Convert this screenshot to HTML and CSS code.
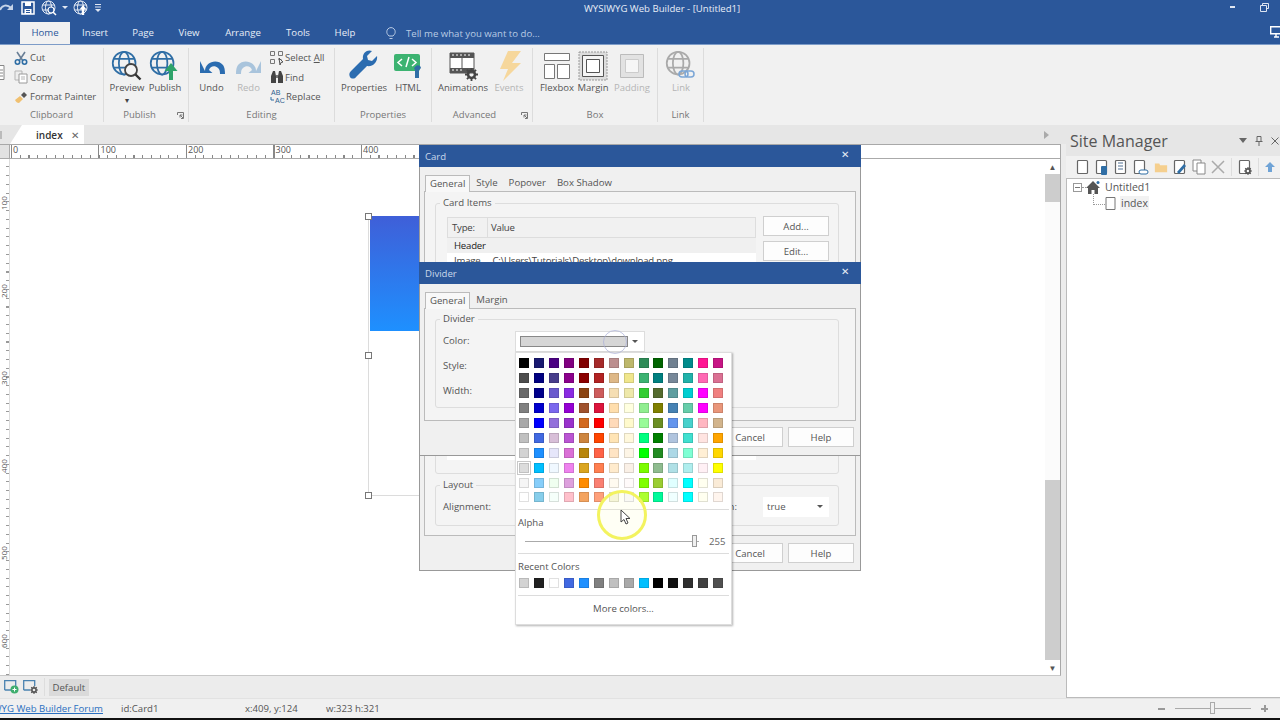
FILE: index.html
```html
<!DOCTYPE html>
<html lang="en">
  <head>
    <meta charset="UTF-8" />
    <meta name="viewport" content="width=device-width, initial-scale=1.0" />
    <title>WYSIWYG Web Builder - [Untitled1]</title>
    <link rel="stylesheet" href="styles.css">
  </head>
  <body>
    <svg class="defs" width="0" height="0">
      <symbol id="globe" viewBox="0 0 32 32">
        <g fill="none" stroke="currentColor" stroke-width="2">
          <circle cx="15" cy="15" r="13" />
          <ellipse cx="15" cy="15" rx="6" ry="13" />
          <path d="M3 10h24M3 20h24" />
        </g>
      </symbol>
      <symbol id="page" viewBox="0 0 14 16">
        <rect x="1.5" y="1.5" width="10" height="13" rx="1" fill="#fff" stroke="#666" stroke-width="1.2" />
      </symbol>
      <symbol id="gear" viewBox="0 0 12 12">
        <circle cx="6" cy="6" r="3.2" fill="none" stroke="currentColor" stroke-width="2.4" />
        <path d="M6 0v2.5M6 9.5V12M0 6h2.5M9.5 6H12M1.8 1.8l1.8 1.8M8.4 8.4l1.8 1.8M1.8 10.2l1.8-1.8M8.4 3.6l1.8-1.8" stroke="currentColor" stroke-width="1.7" />
      </symbol>
    </svg>

    <header class="titlebar">
      <div class="quick-access">
        <svg width="14" height="12" viewBox="0 0 14 12"><path d="M0 8C2 3 7 2 11 6" fill="none" stroke="#c5d3e8" stroke-width="2" /><path d="M13 2v6H7z" fill="#c5d3e8" /></svg>
        <svg class="qa-save" width="14" height="14" viewBox="0 0 14 14"><path d="M1 1h12v12H1z" fill="none" stroke="#fff" stroke-width="1.5" /><path d="M4 1h6v4H4zM3.500 8h7v5h-7z" fill="#fff" /><path d="M5 9.500h4M5 11.500h4" stroke="#2b579a" /></svg>
        <svg class="qa-globe" width="16" height="16" viewBox="0 0 16 16"><use href="#globe" width="16" height="16" color="#e4ebf5" /><circle cx="10" cy="10" r="3" fill="#2b579a" stroke="#fff" stroke-width="1.200" /><path d="M12 12l3 3" stroke="#fff" stroke-width="1.500" /></svg>
        <span class="qa-arrow"></span>
        <svg class="qa-publish" width="16" height="16" viewBox="0 0 16 16"><use href="#globe" width="16" height="16" color="#e4ebf5" /><path d="M10 15V8" stroke="#fff" stroke-width="2.400" /><path d="M6.500 9.500L10 5l3.500 4.500z" fill="#fff" /></svg>
        <svg class="qa-more" width="6" height="8" viewBox="0 0 6 8"><path d="M0 .5h6M0 3h6" stroke="#dfe6f2" /><path d="M0 5h6L3 8z" fill="#dfe6f2" /></svg>
      </div>
      <div class="app-title">WYSIWYG Web Builder - [Untitled1]</div>
      <div class="window-controls">
        <span class="win-min"></span>
        <svg width="9" height="9" viewBox="0 0 9 9"><path d="M2.500 2.500V.5h6v5h-2M.5 2.500h6v6h-6z" fill="none" stroke="#dfe6f2" /></svg>
      </div>
    </header>

    <nav class="menu-tabs">
      <span class="menu-tab active">Home</span>
      <span class="menu-tab insert">Insert</span>
      <span class="menu-tab page">Page</span>
      <span class="menu-tab view">View</span>
      <span class="menu-tab arrange">Arrange</span>
      <span class="menu-tab tools">Tools</span>
      <span class="menu-tab help">Help</span>
      <svg class="bulb" width="10" height="13" viewBox="0 0 10 13"><path d="M3 9C1 7 .8 6 .8 4.800a4.200 4.200 0 0 1 8.400 0C9.200 6 9 7 7 9zM3.500 11.500h3" fill="none" stroke="#b9cbe4" /></svg>
      <span class="tell-me">Tell me what you want to do...</span>
      <svg class="monitor" width="14" height="14" viewBox="0 0 14 14"><path d="M.7.7h11v7H.7zM4 11h5M6 8v3" fill="none" stroke="#fff" stroke-width="1.400" /></svg>
    </nav>

    <section class="ribbon">
      <div class="group clipboard">
        <svg class="paste-edge" width="5" height="15" viewBox="0 0 5 15"><path d="M-3 .5h7v14h-7zM0 5h3M0 8h3M0 11h3" fill="#fff" stroke="#888" /></svg>
        <div class="group-body small-list">
          <div class="small-item">
            <svg width="14" height="14" viewBox="0 0 14 14"><path d="M3 1l6 9M11 1L5 10" stroke="#6a7f96" stroke-width="1.600" /><circle cx="3.500" cy="11" r="2.200" fill="none" stroke="#2f6ea5" stroke-width="1.600" /><circle cx="10.500" cy="11" r="2.200" fill="none" stroke="#2f6ea5" stroke-width="1.600" /></svg>
            <span>Cut</span>
          </div>
          <div class="small-item">
            <svg width="14" height="14" viewBox="0 0 14 14"><path d="M1 1h7v9H1z" fill="#eee" stroke="#b5b5b5" /><path d="M5 4h8v9H5z" fill="#fff" stroke="#9a9a9a" /><path d="M7 7h4M7 9h4" stroke="#b5b5b5" /></svg>
            <span>Copy</span>
          </div>
          <div class="small-item">
            <svg width="14" height="14" viewBox="0 0 14 14"><path d="M1 10l5-4 3 3-4 4c-2 0-3-1-4-3z" fill="#f0c070" /><path d="M7 5l3-3 3 3-3 3z" fill="#555" /></svg>
            <span>Format Painter</span>
          </div>
        </div>
        <div class="group-label">Clipboard</div>
      </div>

      <div class="group publish">
        <div class="group-body big-row">
          <div class="big-button w38">
            <svg class="big-icon" width="32" height="32" viewBox="0 0 32 32"><use href="#globe" width="28" height="28" color="#2f6ea5" /><circle cx="20" cy="20" r="6" fill="#f4f4f4" stroke="#444" stroke-width="1.800" /><path d="M24.500 24.500l5 5" stroke="#333" stroke-width="2.400" /></svg>
            <span>Preview</span>
            <span class="drop">▾</span>
          </div>
          <div class="big-button w38">
            <svg class="big-icon" width="32" height="32" viewBox="0 0 32 32"><use href="#globe" width="28" height="28" color="#2f6ea5" /><path d="M22 30V20" stroke="#2ea36a" stroke-width="4" /><path d="M15.500 21L22 13l6.500 8z" fill="#2ea36a" /></svg>
            <span>Publish</span>
          </div>
        </div>
        <div class="group-label">Publish</div>
        <svg class="launcher" width="7" height="7" viewBox="0 0 7 7"><path d="M.5 3V.5h6v6H4M3 3l3 3M3 5.500V3h2.500" fill="none" stroke="#777" /></svg>
      </div>

      <div class="group editing">
        <div class="group-body big-row">
          <div class="big-button w37">
            <svg class="big-icon" width="32" height="32" viewBox="0 0 32 32"><path d="M9 21C9 12 21 8 27 15c1.500 2 2 5 2 9h-5c0-3-.5-5-2-6-3-3-8-2-9 2l3.500 3H4V11z" fill="#2b6cb0" /></svg>
            <span>Undo</span>
          </div>
          <div class="big-button w37 disabled">
            <svg class="big-icon" width="32" height="32" viewBox="0 0 32 32"><path d="M23 21C23 12 11 8 5 15c-1.500 2-2 5-2 9h5c0-3 .5-5 2-6 3-3 8-2 9 2l-3.500 3H28V11z" fill="#a9c4dc" /></svg>
            <span>Redo</span>
          </div>
          <div class="small-list edit-list">
            <div class="small-item">
              <svg width="14" height="14" viewBox="0 0 14 14"><path d="M.5.5h4v4h-4zM8.500.5h4v4h-4zM.5 8.500h4v4h-4zM8.500 8.500h3" fill="none" stroke="#777" /><path d="M9 7l4 4-2 .5-1 2.500z" fill="none" stroke="#555" /></svg>
              <span>Select <u>A</u>ll</span>
            </div>
            <div class="small-item">
              <svg width="14" height="14" viewBox="0 0 14 14"><path d="M1 13V6l2-5h2l1 5v7zM8 13V6l1-5h2l2 5v7z" fill="#444" /><path d="M6 5h2v3H6z" fill="#777" /></svg>
              <span>Find</span>
            </div>
            <div class="small-item">
              <svg class="replace-icon" width="15" height="15" viewBox="0 0 15 15"><text x="1" y="6" class="mini-text">AB</text><text x="5" y="14" class="mini-text">AC</text><path d="M1 8v3h3" fill="none" stroke="#2f6ea5" /></svg>
              <span>Replace</span>
            </div>
          </div>
        </div>
        <div class="group-label">Editing</div>
      </div>

      <div class="group properties">
        <div class="group-body big-row">
          <div class="big-button w44">
            <svg class="big-icon" width="32" height="32" viewBox="0 0 32 32"><path d="M29 6l-5 5-4-1-1-4 5-5c-5-2-10 2-9 8L3 21c-2 2-2 4-1 6s5 2 6 0l11-11c6 1 11-4 10-10z" fill="#2b6cb0" /></svg>
            <span>Properties</span>
          </div>
          <div class="big-button w44">
            <svg class="big-icon" width="32" height="32" viewBox="0 0 32 32"><rect x="2" y="4" width="26" height="17" rx="2" fill="#3cb371" /><path d="M10 9l-4 3.500 4 3.500M14 17l3-10M20 9l4 3.500-4 3.500" fill="none" stroke="#fff" stroke-width="1.500" /><path d="M24 16a3 3 0 0 1 5 2l-2 2v8h-4v-8l-1-2z" fill="#2f6ea5" /></svg>
            <span>HTML</span>
          </div>
        </div>
        <div class="group-label">Properties</div>
      </div>

      <div class="group advanced">
        <div class="group-body big-row">
          <div class="big-button w46">
            <svg class="big-icon" width="32" height="32" viewBox="0 0 32 32" color="#444"><path d="M3 3h24v20H3z" fill="#fff" stroke="#555" /><path d="M3 3h24v5H3zM3 18h24v5H3z" fill="#555" /><path d="M5 5h2M9 5h2M13 5h2M17 5h2M21 5h2M5 20h2M9 20h2M13 20h2" stroke="#fff" /><path d="M15 8v10" stroke="#555" /><use href="#gear" x="18" y="18" width="13" height="13" /></svg>
            <span>Animations</span>
          </div>
          <div class="big-button w46 disabled">
            <svg class="big-icon" width="32" height="32" viewBox="0 0 32 32"><path d="M28 1H15L7 19h8l-5 12 18-18h-9z" fill="#f6d79c" /></svg>
            <span>Events</span>
          </div>
        </div>
        <div class="group-label">Advanced</div>
        <svg class="launcher" width="7" height="7" viewBox="0 0 7 7"><path d="M.5 3V.5h6v6H4M3 3l3 3M3 5.500V3h2.500" fill="none" stroke="#777" /></svg>
      </div>

      <div class="group box">
        <div class="group-body big-row">
          <div class="big-button w36">
            <svg class="big-icon" width="32" height="32" viewBox="0 0 32 32"><path d="M3.500 3.500h25v7h-25zM3.500 14.500h10v14h-10zM16.500 14.500h12v14h-12z" fill="#fff" stroke="#777" /></svg>
            <span>Flexbox</span>
          </div>
          <div class="big-button w36">
            <svg class="big-icon" width="32" height="32" viewBox="0 0 32 32"><rect x="2" y="2" width="28" height="28" fill="#ddd" stroke="#999" stroke-dasharray="2 1" /><path d="M5.500 5.500h21v21h-21z" fill="#f5f5f5" stroke="#555" /><path d="M9.500 9.500h13v13h-13z" fill="#fff" stroke="#555" /></svg>
            <span>Margin</span>
          </div>
          <div class="big-button w42 disabled">
            <svg class="big-icon" width="32" height="32" viewBox="0 0 32 32"><path d="M4.500 4.500h23v23h-23z" fill="#e2e2e2" stroke="#bbb" /><path d="M9.500 9.500h13v13h-13z" fill="#f6f6f6" stroke="#ccc" /></svg>
            <span>Padding</span>
          </div>
        </div>
        <div class="group-label">Box</div>
      </div>

      <div class="group link">
        <div class="group-body big-row">
          <div class="big-button w44 disabled">
            <svg class="big-icon" width="32" height="32" viewBox="0 0 32 32"><use href="#globe" width="28" height="28" color="#aaa" /><rect x="14" y="21" width="9" height="6" rx="3" fill="none" stroke="#7ba6d6" stroke-width="1.500" /><rect x="20" y="21" width="9" height="6" rx="3" fill="none" stroke="#7ba6d6" stroke-width="1.500" /></svg>
            <span>Link</span>
          </div>
        </div>
        <div class="group-label">Link</div>
      </div>
    </section>

    <main class="workspace">
      <div class="doc-column">
        <div class="doc-tabs">
          <span class="tab-prev"></span>
          <div class="doc-tab"><span>index</span><span class="doc-tab-close">✕</span></div>
          <span class="tab-next"></span>
        </div>
        <div class="doc-pane">
          <div class="ruler-row">
            <div class="ruler-corner"></div>
            <div class="h-ruler">
              <span>0</span><span>100</span><span>200</span><span>300</span><span>400</span>
            </div>
          </div>
          <div class="doc-body">
            <div class="v-ruler">
              <span>100</span><span>200</span><span>300</span><span>400</span><span>500</span><span>600</span>
            </div>
            <div class="canvas">
              <div class="card-selection">
                <div class="card-header"></div>
                <i class="handle handle-top"></i>
                <i class="handle handle-mid"></i>
                <i class="handle handle-bottom"></i>
              </div>
            </div>
            <div class="scrollbar">
              <div class="scroll-btn">▲</div>
              <div class="scroll-thumb-top"></div>
              <div class="scroll-track"></div>
              <div class="scroll-thumb-bottom"></div>
              <div class="scroll-btn">▼</div>
            </div>
          </div>
        </div>
        <div class="layout-bar">
          <svg width="15" height="14" viewBox="0 0 15 14"><path d="M.7 10V.7h11V6M.7 10H7" fill="none" stroke="#4a82b0" stroke-width="1.300" /><circle cx="10.500" cy="9.500" r="4" fill="#3fae6e" /><path d="M8.500 9.500h4M10.500 7.500v4" stroke="#fff" /></svg>
          <svg width="15" height="14" viewBox="0 0 15 14" color="#555"><path d="M.7 10V.7h11V6M.7 10H7" fill="none" stroke="#4a82b0" stroke-width="1.300" /><use href="#gear" x="7" y="6" width="8" height="8" /></svg>
          <span class="layout-sep"></span>
          <span class="layout-default">Default</span>
        </div>
      </div>

      <aside class="site-panel">
        <div class="site-title">
          <span>Site Manager</span>
          <span class="site-controls">
            <span class="site-drop"></span>
            <svg width="8" height="10" viewBox="0 0 8 10"><path d="M2 .5h4v5H2zM.5 5.500h7M4 6v4" fill="none" stroke="#666" /></svg>
            <svg width="8" height="8" viewBox="0 0 8 8"><path d="M.5.5l7 7M7.500.5l-7 7" stroke="#666" /></svg>
          </span>
        </div>
        <div class="site-toolbar">
          <svg width="14" height="16"><use href="#page" /></svg>
          <svg width="14" height="16" viewBox="0 0 14 16"><use href="#page" /><rect x="6" y="7" width="6" height="9" rx="1" fill="#2f6ea5" /></svg>
          <svg width="14" height="16" viewBox="0 0 14 16"><use href="#page" /><path d="M4 4h5M4 7h5M4 10h5" stroke="#8aa0b8" stroke-width="1.500" /></svg>
          <svg width="16" height="16" viewBox="0 0 16 16"><use href="#page" width="14" height="16" /><rect x="6" y="11" width="9" height="4" rx="2" fill="#fff" stroke="#2f6ea5" /></svg>
          <svg width="14" height="14" viewBox="0 0 16 14"><path d="M1 3h5l1 2h8v8H1z" fill="#f5cf8e" /></svg>
          <svg width="14" height="16" viewBox="0 0 14 16"><use href="#page" /><path d="M4 13l7-8 2 2-7 8z" fill="#2f6ea5" /></svg>
          <svg width="14" height="16" viewBox="0 0 14 16"><path d="M1 1h8v11H1z" fill="#fff" stroke="#888" /><path d="M5 4h8v11H5z" fill="#fff" stroke="#888" /></svg>
          <svg width="14" height="14" viewBox="0 0 14 14"><path d="M1 1l12 12M13 1L1 13" stroke="#aaa" stroke-width="1.500" /></svg>
          <span class="toolbar-sep"></span>
          <svg width="14" height="16" viewBox="0 0 14 16" color="#555"><use href="#page" /><use href="#gear" x="6" y="8" width="8" height="8" /></svg>
          <span class="toolbar-sep"></span>
          <svg width="10" height="10" viewBox="0 0 10 10"><path d="M5 0l5 5H7v5H3V5H0z" fill="#6fa3d6" /></svg>
        </div>
        <div class="site-tree">
          <div class="tree-row">
            <span class="tree-box"></span>
            <span class="tree-dash"></span>
            <svg width="14" height="13" viewBox="0 0 14 13"><path d="M7 0L0 7h2v6h3.500V9h3v4H12V7h2z" fill="#555" /><circle cx="12" cy="1.500" r="1.500" fill="#2f6ea5" /></svg>
            <span class="tree-label">Untitled1</span>
          </div>
          <div class="tree-row tree-child">
            <span class="tree-elbow"></span>
            <svg width="11" height="13" viewBox="0 0 11 13"><path d="M1 .5h9v12H1z" fill="#fff" stroke="#777" /></svg>
            <span class="tree-label selected">index</span>
          </div>
        </div>
      </aside>
    </main>

    <footer class="statusbar">
      <div class="status-link"><a>WYSIWYG Web Builder Forum</a></div>
      <span class="status-id">id:Card1</span>
      <span class="status-pos">x:409, y:124</span>
      <span class="status-size">w:323 h:321</span>
      <div class="zoom-control">
        <span class="zoom-minus"></span>
        <span class="zoom-line"><i></i></span>
        <span class="zoom-plus"></span>
      </div>
    </footer>
    <div class="screen-edge"></div>

    <!-- dialogs, they float over the editor -->
    <div class="dialog card-dialog">
      <div class="dialog-title">Card<span class="dialog-close">✕</span></div>
      <div class="dialog-body">
        <div class="dialog-tabs">
          <span class="dialog-tab active">General</span>
          <span class="dialog-tab">Style</span>
          <span class="dialog-tab">Popover</span>
          <span class="dialog-tab">Box Shadow</span>
        </div>
        <div class="tab-panel">
          <fieldset class="field-group card-items">
            <legend>Card Items</legend>
            <div class="items-row">
              <div class="items-list">
                <div class="items-head"><span class="col-type">Type:</span><span class="col-value">Value</span></div>
                <div class="items-item strong">Header</div>
                <div class="items-item">Image<span class="items-path">C:\Users\Tutorials\Desktop\download.png</span></div>
              </div>
              <div class="items-buttons">
                <button class="btn">Add...</button>
                <button class="btn">Edit...</button>
              </div>
            </div>
          </fieldset>
          <fieldset class="field-group layout-group">
            <legend>Layout</legend>
            <div class="layout-row">
              <span>Alignment:</span>
              <span class="layout-colon">n:</span>
              <div class="select-box">true<span class="select-arrow"></span></div>
            </div>
          </fieldset>
        </div>
        <div class="dialog-buttons">
          <button class="btn">Cancel</button>
          <button class="btn">Help</button>
        </div>
      </div>
    </div>

    <div class="dialog divider-dialog">
      <div class="dialog-title">Divider<span class="dialog-close">✕</span></div>
      <div class="dialog-body">
        <div class="dialog-tabs">
          <span class="dialog-tab active">General</span>
          <span class="dialog-tab">Margin</span>
        </div>
        <div class="tab-panel">
          <fieldset class="field-group divider-group">
            <legend>Divider</legend>
            <div class="form-row color-row">
              <label>Color:</label>
              <div class="color-select"><span class="color-value"></span><span class="select-arrow"></span></div>
            </div>
            <div class="form-row"><label>Style:</label></div>
            <div class="form-row"><label>Width:</label></div>
          </fieldset>
        </div>
        <div class="dialog-buttons">
          <button class="btn">Cancel</button>
          <button class="btn">Help</button>
        </div>
      </div>
    </div>

    <div class="color-popup">
      <div class="swatches" id="palette"></div>
      <div class="popup-section alpha">
        <div class="popup-label">Alpha</div>
        <div class="alpha-row">
          <span class="alpha-line"><i></i></span>
          <span class="alpha-value">255</span>
        </div>
      </div>
      <div class="popup-section recent">
        <div class="popup-label">Recent Colors</div>
        <div class="swatches" id="recent"></div>
      </div>
      <div class="popup-section more-colors">More colors...</div>
    </div>

    <div class="click-ring"></div>
    <div class="mouse-ring"></div>
    <svg class="cursor" width="11" height="16" viewBox="0 0 11 16"><path d="M1 1v12l3-2.500 2 4.500 2-1-2-4.500h4z" fill="#fff" stroke="#444" /></svg>

    <script src="script.js"></script>
  </body>
</html>
```

FILE: styles.css
```css
* {
  box-sizing: border-box;
}

body {
  margin: 0;
  width: 1280px;
  height: 720px;
  overflow: hidden;
  display: flex;
  flex-direction: column;
  position: relative;
  background: #f0f0f0;
  color: #444;
  font-family: "Open Sans", "Liberation Sans", sans-serif;
  font-size: 9.600px;
}

.defs {
  position: absolute;
}

/* title bar */
.titlebar {
  height: 22px;
  background: #2b579a;
  display: flex;
  align-items: flex-start;
  color: #e8eef7;
  position: relative;
  flex-shrink: 0;
}

.quick-access {
  display: flex;
  align-items: center;
  height: 15px;
  width: 110px;
}

.qa-save {
  margin-left: 7px;
}

.qa-globe {
  margin-left: 6px;
}

.qa-arrow {
  width: 0;
  height: 0;
  margin: 0 5px;
  border: 3px solid transparent;
  border-top: 3px solid #dfe6f2;
  border-bottom: 0;
}

.qa-more {
  margin-left: 6px;
}

.app-title {
  position: absolute;
  left: 584px;
  top: 2px;
  line-height: 14px;
  white-space: nowrap;
}

.window-controls {
  margin-left: auto;
  display: flex;
  align-items: center;
  gap: 25px;
  height: 14px;
  padding-right: 11px;
}

.win-min {
  width: 5px;
  height: 2px;
  background: #dfe6f2;
}

/* menu tabs */
.menu-tabs {
  height: 23px;
  background: #2b579a;
  border-bottom: 1px solid #7d9cc8;
  display: flex;
  align-items: center;
  color: #e8eef7;
  flex-shrink: 0;
  position: relative;
  padding-left: 20px;
}

.menu-tab {
  line-height: 22px;
  text-align: center;
}

.menu-tab.active {
  width: 50px;
  height: 22px;
  background: #f1f1f1;
  color: #2b579a;
}

.insert {
  width: 50px;
}

.page {
  width: 46px;
}

.view {
  width: 46px;
}

.arrange {
  width: 62px;
}

.tools {
  width: 48px;
}

.help {
  width: 46px;
}

.bulb {
  margin-left: 18px;
}

.tell-me {
  margin-left: 10px;
  color: #b9cbe4;
}

.monitor {
  margin-left: auto;
  margin-right: -4px;
}

/* ribbon */
.ribbon {
  height: 80px;
  background: #f1f1f1;
  display: flex;
  flex-shrink: 0;
  font-size: 9.500px;
}

.group {
  display: flex;
  flex-direction: column;
  position: relative;
  margin: 3px 0;
  border-right: 1px solid #dcdcdc;
  flex-shrink: 0;
}

.clipboard {
  width: 104px;
}

.publish {
  width: 85px;
}

.editing {
  width: 146px;
}

.properties {
  width: 97px;
}

.advanced {
  width: 101px;
}

.box {
  width: 125px;
}

.link {
  width: 46px;
}

.group-body {
  height: 60px;
  flex-shrink: 0;
  display: flex;
}

.group-label {
  height: 14px;
  line-height: 14px;
  text-align: center;
  color: #777;
}

.publish .group-label {
  padding-right: 13px;
}

.advanced .group-label {
  padding-right: 15px;
}

.launcher {
  position: absolute;
  right: 4px;
  bottom: 3px;
}

.big-row {
  padding-top: 2px;
}

.publish .big-row {
  padding-left: 4px;
}

.editing .big-row {
  padding-left: 4px;
}

.properties .big-row {
  padding-left: 7px;
}

.advanced .big-row {
  padding-left: 8px;
}

.box .big-row {
  padding-left: 6px;
}

.link .big-row {
  padding-left: 1px;
}

.big-button {
  display: flex;
  flex-direction: column;
  align-items: center;
  line-height: 14px;
  color: #555;
  white-space: nowrap;
}

.big-button.disabled {
  color: #b5b5b5;
}

.big-icon {
  margin-bottom: -1px;
}

.drop {
  font-size: 8px;
  line-height: 9px;
  color: #444;
}

.w36 {
  width: 36px;
}

.w37 {
  width: 37px;
}

.w38 {
  width: 38px;
}

.w42 {
  width: 42px;
}

.w44 {
  width: 44px;
}

.w46 {
  width: 46px;
}

.small-list {
  display: flex;
  flex-direction: column;
  padding-top: 0;
}

.clipboard .small-list {
  padding-left: 14px;
}

.edit-list {
  margin-left: 3px;
  margin-top: -2px;
}

.small-item {
  display: flex;
  align-items: center;
  height: 19.500px;
  gap: 1px;
  color: #555;
  white-space: nowrap;
}

.clipboard .small-item {
  gap: 2px;
}

.mini-text {
  font-size: 7px;
  fill: #2f5f8f;
  font-family: "Liberation Sans", sans-serif;
}

.paste-edge {
  position: absolute;
  left: 0;
  top: 17px;
}

/* workspace */
.workspace {
  flex: 1;
  display: flex;
  min-height: 0;
}

.doc-column {
  width: 1066px;
  flex-shrink: 0;
  display: flex;
  flex-direction: column;
  padding-right: 5px;
  background: #ececec;
}

.doc-tabs {
  height: 19px;
  display: flex;
  align-items: flex-end;
  background: #e6e6e6;
  margin-right: -5px;
  padding-right: 5px;
  position: relative;
  flex-shrink: 0;
}

.tab-prev {
  position: absolute;
  left: -2px;
  top: 6px;
  width: 4px;
  height: 8px;
  background: #bbb;
}

.doc-tab {
  width: 74px;
  height: 19px;
  margin-left: 10px;
  padding-left: 26px;
  display: flex;
  align-items: center;
  background: #fff;
  clip-path: polygon(12px 0, 100% 0, 100% 100%, 0 100%);
  font-weight: 600;
  font-size: 10px;
  color: #333;
}

.doc-tab-close {
  margin-left: 8px;
  font-weight: 400;
  font-size: 10px;
  color: #666;
}

.tab-next {
  position: absolute;
  right: 13px;
  top: 6px;
  width: 0;
  height: 0;
  border: 4px solid transparent;
  border-left: 5px solid #aaa;
}

.doc-pane {
  flex: 1;
  display: flex;
  flex-direction: column;
  min-height: 0;
  border-top: 1px solid #a8a8a8;
  border-right: 1px solid #a8a8a8;
  border-bottom: 1px solid #c8c8c8;
  background: #fff;
}

.ruler-row {
  height: 14px;
  display: flex;
  border-bottom: 1px solid #aaa;
  flex-shrink: 0;
}

.ruler-corner {
  width: 10px;
  background: #e2e2e2;
  border-right: 1px solid #aaa;
}

.h-ruler {
  width: 409px;
  display: flex;
  padding-left: 3px;
  font-size: 9px;
  color: #555;
  background-image:
    repeating-linear-gradient(90deg, #888 0 1px, transparent 1px 87.500px),
    repeating-linear-gradient(90deg, #888 0 1px, transparent 1px 8.750px);
  background-size: 100% 100%, 100% 3px;
  background-position: 1px 0, 1px bottom;
  background-repeat: no-repeat;
}

.h-ruler span {
  flex: none;
  width: 87.500px;
  height: 12px;
  margin-top: -1px;
  line-height: 12px;
}

.h-ruler span:last-child {
  width: 20px;
}

.doc-body {
  flex: 1;
  display: flex;
  min-height: 0;
}

.v-ruler {
  width: 10px;
  flex-shrink: 0;
  padding-top: 37px;
  display: flex;
  flex-direction: column;
  font-size: 8px;
  line-height: 8px;
  color: #555;
  border-right: 1px solid #ddd;
  background-image: repeating-linear-gradient(0deg, #999 0 1px, transparent 1px 8.750px);
  background-size: 3px 100%;
  background-position: right 0;
  background-repeat: no-repeat;
}

.v-ruler span {
  flex: none;
  width: 8px;
  height: 14px;
  margin-bottom: 73.500px;
  writing-mode: vertical-rl;
  transform: rotate(180deg);
  text-align: center;
  white-space: nowrap;
}

.canvas {
  flex: 1;
  position: relative;
}

/* the selected card on the page */
.card-selection {
  position: absolute;
  left: 358px;
  top: 57px;
  width: 62px;
  height: 280px;
  border-left: 1px solid #dcdcdc;
  border-bottom: 1px solid #dcdcdc;
}

.card-header {
  margin-left: 1px;
  height: 115px;
  background: linear-gradient(#3f5fd8, #1e90ff);
}

.handle {
  position: absolute;
  left: -4px;
  width: 7px;
  height: 7px;
  background: #fff;
  border: 1px solid #777;
}

.handle-top {
  top: -3px;
}

.handle-mid {
  top: 136px;
}

.handle-bottom {
  bottom: -4px;
}

.scrollbar {
  width: 15px;
  flex-shrink: 0;
  display: flex;
  flex-direction: column;
  background: #fff;
}

.scroll-btn {
  height: 15px;
  font-size: 8px;
  line-height: 15px;
  text-align: center;
  color: #555;
}

.scroll-thumb-top {
  height: 28px;
  background: #cdcdcd;
}

.scroll-track {
  flex: 1;
  background: #fbfbfb;
}

.scroll-thumb-bottom {
  height: 180px;
  background: #cdcdcd;
}

.layout-bar {
  height: 22px;
  display: flex;
  align-items: center;
  gap: 4px;
  padding-left: 4px;
  flex-shrink: 0;
}

.layout-sep {
  width: 1px;
  height: 18px;
  background: #ddd;
  margin-left: 2px;
}

.layout-default {
  padding: 0 3.500px;
  line-height: 17px;
  background: #dadada;
  color: #555;
}

/* site manager */
.site-panel {
  flex: 1;
  min-width: 0;
  display: flex;
  flex-direction: column;
  background: #e6e6e6;
}

.site-title {
  height: 31px;
  flex-shrink: 0;
  display: flex;
  align-items: center;
  padding: 0 1px 0 4px;
  font-size: 16px;
  color: #555;
}

.site-controls {
  margin-left: auto;
  display: flex;
  align-items: center;
  gap: 8px;
}

.site-drop {
  width: 0;
  height: 0;
  border: 4px solid transparent;
  border-top: 5px solid #666;
  border-bottom: 0;
}

.site-toolbar {
  height: 22px;
  flex-shrink: 0;
  background: #f1f1f1;
  display: flex;
  align-items: center;
  gap: 5px;
  padding-left: 10px;
  overflow: hidden;
}

.site-toolbar svg {
  flex-shrink: 0;
}

.toolbar-sep {
  width: 1px;
  height: 18px;
  flex-shrink: 0;
  background: #ddd;
  margin: 0 1px;
}

.site-tree {
  flex: 1;
  background: #fff;
  border-left: 1px solid #bbb;
  border-top: 1px solid #bbb;
  border-bottom: 1px solid #bbb;
  padding: 0 0 0 6px;
  font-size: 10.500px;
  color: #555;
}

.tree-row {
  display: flex;
  align-items: center;
  height: 16px;
}

.tree-box {
  width: 9px;
  height: 9px;
  border: 1px solid #999;
  background: linear-gradient(#777, #777) center / 5px 1px no-repeat;
}

.tree-dash {
  width: 4px;
  border-top: 1px dotted #999;
}

.tree-row svg {
  flex-shrink: 0;
}

.tree-label {
  margin-left: 5px;
}

.tree-child {
  padding-left: 18px;
}

.tree-elbow {
  width: 12px;
  height: 11px;
  margin-top: -8px;
  margin-left: 2px;
  border-left: 1px dotted #999;
  border-bottom: 1px dotted #999;
}

.tree-child .tree-label {
  margin-left: 4px;
  padding: 0 1px;
  background: #f2f2f2;
}

/* status bar */
.statusbar {
  height: 20px;
  display: flex;
  align-items: center;
  background: #f0f0f0;
  border-top: 1px solid #e2e2e2;
  flex-shrink: 0;
  color: #555;
}

.status-link {
  width: 103px;
  display: flex;
  justify-content: flex-end;
  overflow: hidden;
  white-space: nowrap;
  margin-right: 18px;
}

.status-link a {
  color: #2a6fc0;
  text-decoration: underline;
}

.status-id {
  width: 124px;
}

.status-pos {
  width: 81px;
}

.zoom-control {
  margin-left: auto;
  display: flex;
  align-items: center;
  padding-right: 12px;
}

.zoom-minus {
  width: 7px;
  height: 2px;
  background: #999;
}

.zoom-line {
  width: 76px;
  height: 1px;
  margin: 0 10px;
  background: #aaa;
  position: relative;
}

.zoom-line i {
  position: absolute;
  left: 35px;
  top: -6px;
  width: 5px;
  height: 12px;
  background: #f0f0f0;
  border: 1px solid #aaa;
}

.zoom-plus {
  width: 7px;
  height: 7px;
  background:
    linear-gradient(#999, #999) center / 7px 2px no-repeat,
    linear-gradient(#999, #999) center / 2px 7px no-repeat;
}

.screen-edge {
  height: 2px;
  background: #111;
  flex-shrink: 0;
}

/* dialogs */
.dialog {
  position: absolute;
  left: 419px;
  width: 442px;
  background: #f0f0f0;
  border: 1px solid #999;
  border-top: 0;
  display: flex;
  flex-direction: column;
}

.card-dialog {
  top: 145px;
  height: 426px;
}

.divider-dialog {
  top: 262px;
  height: 194px;
}

.dialog-title {
  height: 22px;
  margin: 0 -1px;
  padding: 1px 6px 0;
  background: #2b579a;
  color: #c9d7ea;
  line-height: 21px;
  position: relative;
  flex-shrink: 0;
}

.dialog-close {
  position: absolute;
  right: 12px;
  top: -1px;
  font-size: 10px;
  color: #e6ecf5;
}

.dialog-body {
  flex: 1;
  display: flex;
  flex-direction: column;
  padding: 8px 4px 0;
  min-height: 0;
}

.dialog-tabs {
  display: flex;
  height: 16px;
  gap: 11px;
  padding-left: 1px;
  color: #555;
  flex-shrink: 0;
}

.dialog-tab {
  line-height: 15px;
}

.dialog-tab.active {
  padding: 0 4px;
  margin-right: -5px;
  background: #f8f8f8;
  border: 1px solid #bbb;
  border-bottom: 0;
  position: relative;
  z-index: 1;
  height: 17px;
}

.tab-panel {
  border: 1px solid #bbb;
  background: #f4f4f4;
  padding: 6px 16px 0 10px;
  display: flex;
  flex-direction: column;
  flex-shrink: 0;
}

.field-group {
  margin: 0;
  padding: 0 9px 0 7px;
  min-width: 0;
  border: 1px solid #ddd;
  border-radius: 3px;
  color: #555;
}

.field-group legend {
  padding: 0 3px;
  margin-left: -3px;
  line-height: 10px;
}

.card-dialog .tab-panel {
  height: 345px;
}

.card-items {
  height: 276px;
}

.items-row {
  display: flex;
  gap: 7px;
  margin-top: 9px;
  padding-left: 4px;
}

.items-list {
  width: 310px;
  height: 243px;
  background: #fff;
  color: #444;
  letter-spacing: -.2px;
}

.items-head {
  height: 21px;
  display: flex;
  align-items: center;
  background: #f1f1f1;
  border: 1px solid #ddd;
}

.col-type {
  width: 40px;
  padding-left: 4px;
  border-right: 1px solid #ddd;
  line-height: 19px;
}

.col-value {
  padding-left: 3px;
}

.items-item {
  height: 15px;
  line-height: 15px;
  padding-left: 7px;
}

.items-item.strong {
  background: #f0f0f0;
  color: #222;
}

.items-path {
  margin-left: 12px;
}

.items-buttons {
  display: flex;
  flex-direction: column;
  gap: 5px;
  margin-top: -1px;
}

.btn {
  width: 66px;
  height: 20px;
  padding: 0;
  background: #fdfdfd;
  border: 1px solid #cfcfcf;
  font-family: "Open Sans", "Liberation Sans", sans-serif;
  font-size: 9.600px;
  color: #555;
}

.layout-group {
  margin-top: 6px;
  height: 46px;
}

.layout-row {
  display: flex;
  align-items: center;
  height: 23px;
  margin-top: 5px;
}

.layout-colon {
  margin-left: auto;
  margin-right: 26px;
}

.select-box {
  width: 66px;
  height: 20px;
  padding-left: 4px;
  line-height: 19px;
  background: #fff;
  position: relative;
}

.select-arrow {
  position: absolute;
  right: 6px;
  top: 8px;
  width: 0;
  height: 0;
  border: 3px solid transparent;
  border-top: 3px solid #555;
  border-bottom: 0;
}

.dialog-buttons {
  display: flex;
  justify-content: flex-end;
  gap: 5px;
  padding: 7px 2px 0 0;
}

.divider-dialog .tab-panel {
  height: 113px;
  padding-top: 5px;
}

.divider-dialog .dialog-buttons {
  padding-top: 6px;
}

.divider-group {
  height: 94px;
}

.form-row {
  display: flex;
  align-items: center;
  height: 25px;
}

.form-row label {
  width: 72px;
}

.color-row {
  margin-top: 4px;
}

.color-select {
  width: 130px;
  height: 21px;
  margin-top: 2px;
  padding: 4px;
  background: #fff;
  border: 1px solid #ddd;
  position: relative;
}

.color-value {
  display: block;
  width: 108px;
  height: 11px;
  background: #d6d6d6;
  border: 1px solid #888;
}

/* colour popup */
.color-popup {
  position: absolute;
  left: 515px;
  top: 352px;
  width: 217px;
  height: 273px;
  background: #fff;
  border: 1px solid #ddd;
  box-shadow: 1px 1px 2px rgba(0, 0, 0, 0.3);
  display: flex;
  flex-direction: column;
  z-index: 2;
}

#palette {
  padding: 3px 1px 4px;
  height: 156px;
}

.swatches {
  display: grid;
  grid-template-columns: repeat(14, 14.900px);
  grid-auto-rows: 14.900px;
  align-items: center;
  justify-items: center;
  flex-shrink: 0;
}

.swatch {
  width: 10px;
  height: 10px;
  border: 1px solid rgba(0, 0, 0, 0.12);
}

.swatch.selected {
  outline: 1px solid #c8c8c8;
  outline-offset: 1px;
}

.popup-section {
  margin: 0 2px;
  border-top: 1px solid #dcdcdc;
  flex-shrink: 0;
}

.alpha {
  height: 44px;
  padding-top: 6px;
}

.popup-label {
  line-height: 13px;
  color: #555;
}

.alpha-row {
  display: flex;
  align-items: center;
  margin-top: 6px;
}

.alpha-line {
  width: 174px;
  height: 1px;
  margin-left: 7px;
  background: #aaa;
  position: relative;
}

.alpha-line i {
  position: absolute;
  left: 167px;
  top: -6px;
  width: 5px;
  height: 12px;
  background: #f0f0f0;
  border: 1px solid #999;
}

.alpha-value {
  margin-left: 10px;
  color: #666;
}

.recent {
  height: 42px;
  padding-top: 6px;
}

.recent .popup-label {
  margin-bottom: 3px;
}

#recent {
  margin-left: -1px;
}

.more-colors {
  line-height: 26px;
  text-align: center;
  color: #555;
}

/* screen recorder mouse marks */
.click-ring {
  position: absolute;
  left: 603px;
  top: 330px;
  width: 24px;
  height: 24px;
  border: 1.500px solid rgba(170, 175, 215, 0.7);
  border-radius: 50%;
  z-index: 3;
}

.mouse-ring {
  position: absolute;
  left: 597px;
  top: 490px;
  width: 50px;
  height: 50px;
  border: 3px solid #f3f35f;
  border-radius: 50%;
  background: rgba(255, 255, 190, 0.15);
  z-index: 3;
}

.cursor {
  position: absolute;
  left: 620px;
  top: 509px;
  z-index: 4;
}
```

FILE: script.js
```js
const paletteColors = [
  '#000000', '#191970', '#4b0082', '#800080', '#800000', '#a52a2a', '#bc8f8f', '#bdb76b', '#2e8b57', '#006400', '#708090', '#008b8b', '#ff1493', '#c71585',
  '#4d4d4d', '#000080', '#483d8b', '#8b008b', '#8b0000', '#b22222', '#deb887', '#f0e68c', '#3cb371', '#008080', '#778899', '#20b2aa', '#ff69b4', '#db7093',
  '#696969', '#00008b', '#6a5acd', '#8a2be2', '#8b4513', '#cd5c5c', '#f5deb3', '#eee8aa', '#32cd32', '#556b2f', '#5f9ea0', '#00ced1', '#ff00ff', '#f08080',
  '#808080', '#0000cd', '#7b68ee', '#9400d3', '#a0522d', '#dc143c', '#ffdead', '#ffffe0', '#90ee90', '#808000', '#4682b4', '#66cdaa', '#ff00ff', '#e9967a',
  '#a9a9a9', '#0000ff', '#9370db', '#9932cc', '#d2691e', '#ff0000', '#ffdab9', '#fffacd', '#98fb98', '#6b8e23', '#6495ed', '#48d1cc', '#ffb6c1', '#d2b48c',
  '#c0c0c0', '#4169e1', '#d8bfd8', '#ba55d3', '#cd853f', '#ff4500', '#ffe4b5', '#fff8dc', '#00ff7f', '#008000', '#b0c4de', '#40e0d0', '#ffe4e1', '#ffa500',
  '#d3d3d3', '#1e90ff', '#e6e6fa', '#da70d6', '#b8860b', '#ff6347', '#ffe4c4', '#fdf5e6', '#00ff00', '#228b22', '#add8e6', '#7fffd4', '#ffefd5', '#ffd700',
  '#dcdcdc', '#00bfff', '#f0f8ff', '#ee82ee', '#daa520', '#ff7f50', '#ffebcd', '#faf0e6', '#7cfc00', '#8fbc8f', '#b0e0e6', '#afeeee', '#fff0f5', '#ffff00',
  '#f5f5f5', '#87cefa', '#f0fff0', '#dda0dd', '#ff8c00', '#fa8072', '#fffaf0', '#fffafa', '#7fff00', '#9acd32', '#e0ffff', '#00ffff', '#fffff0', '#faebd7',
  '#ffffff', '#87ceeb', '#f5fffa', '#ffc0cb', '#f4a460', '#ffa07a', '#f5f5dc', '#f8f8ff', '#adff2f', '#00fa9a', '#f0ffff', '#00ffff', '#fffff0', '#fff5ee',
];

const recentColors = ['#d3d3d3', '#212121', '#ffffff', '#4169e1', '#1e90ff', '#808080', '#c0c0c0', '#a9a9a9', '#00bfff', '#000000', '#101010', '#2f2f2f', '#404040', '#505050'];

function addSwatches(container, colors, selected) {
  colors.forEach(color => {
    const swatch = document.createElement('div');
    swatch.classList.add('swatch');
    swatch.style.background = color;
    if (color === selected) {
      swatch.classList.add('selected');
    }
    container.appendChild(swatch);
  });
}

addSwatches(document.getElementById('palette'), paletteColors, '#dcdcdc');
addSwatches(document.getElementById('recent'), recentColors);
```
